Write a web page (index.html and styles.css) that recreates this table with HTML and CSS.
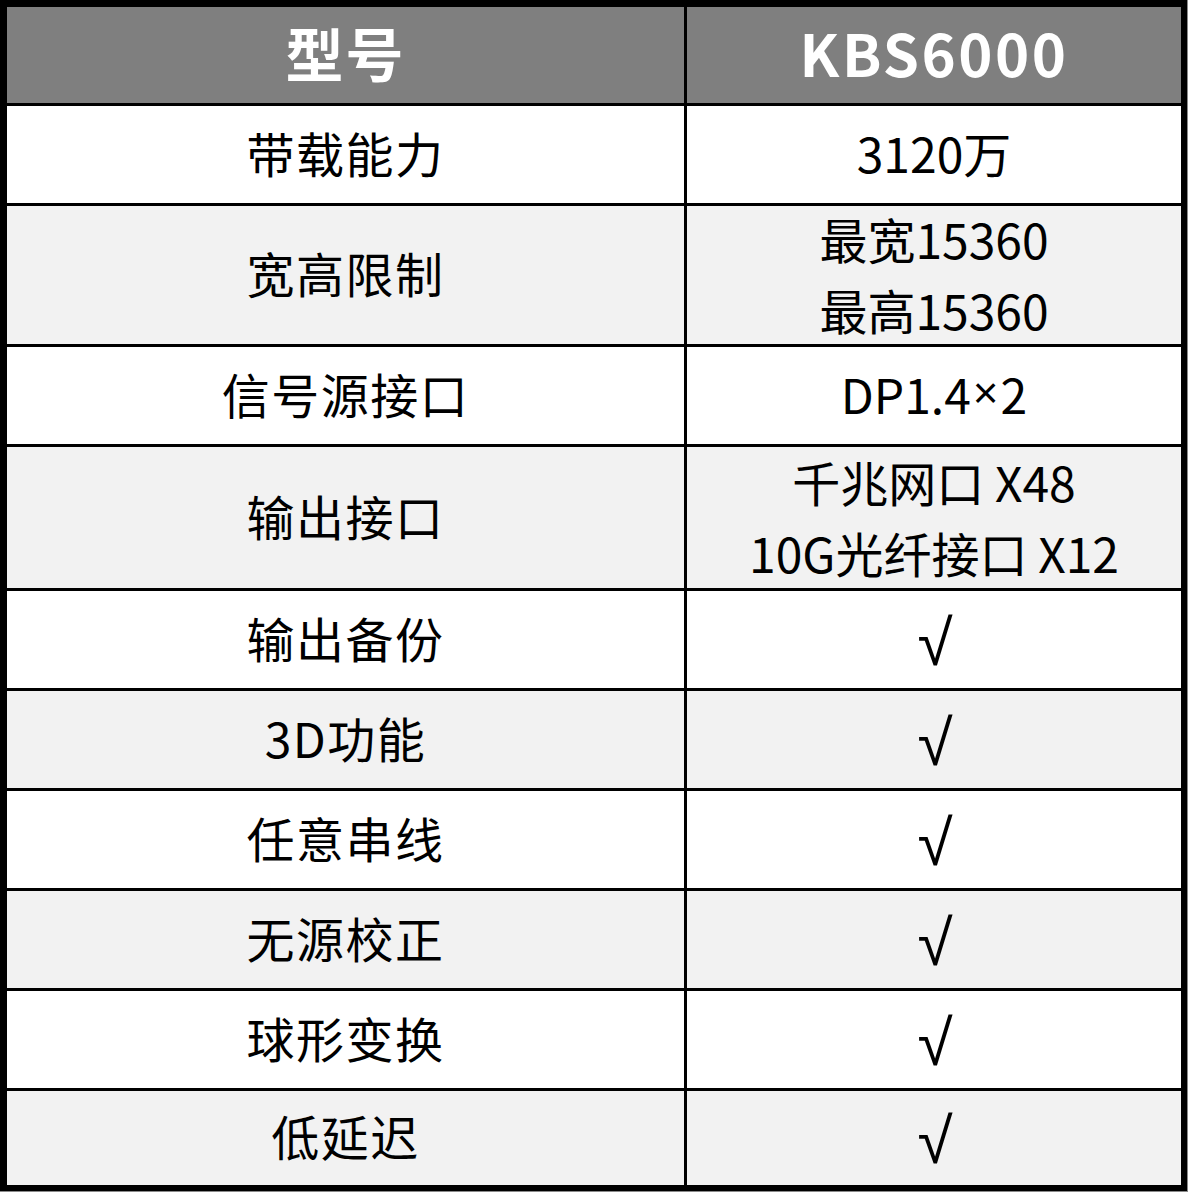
FILE: index.html
```html
<!DOCTYPE html>
<html lang="zh-CN">
<head>
<meta charset="utf-8">
<title>KBS6000</title>
<link rel="stylesheet" href="styles.css">
</head>
<body>
<div class="spec">
  <div class="cell head">型号</div>
  <div class="cell head latin">KBS6000</div>

  <div class="cell label">带载能力</div>
  <div class="cell value">3120万</div>

  <div class="cell label alt">宽高限制</div>
  <div class="cell value alt multi">最宽15360<br>最高15360</div>

  <div class="cell label">信号源接口</div>
  <div class="cell value">DP1.4<span class="times">×</span>2</div>

  <div class="cell label alt">输出接口</div>
  <div class="cell value alt multi">千兆网口 X48<br>10G光纤接口 X12</div>

  <div class="cell label">输出备份</div>
  <div class="cell check">√</div>

  <div class="cell label alt">3D功能</div>
  <div class="cell alt check">√</div>

  <div class="cell label">任意串线</div>
  <div class="cell check">√</div>

  <div class="cell label alt">无源校正</div>
  <div class="cell alt check">√</div>

  <div class="cell label">球形变换</div>
  <div class="cell check">√</div>

  <div class="cell label alt">低延迟</div>
  <div class="cell alt check">√</div>
</div>
</body>
</html>
```
FILE: styles.css
```css
html, body {
  margin: 0;
  padding: 0;
  background: #8a8a8a;
}
body {
  width: 1188px;
  height: 1192px;
  font-family: "Noto Sans CJK SC", "Noto Sans", sans-serif;
}
.spec {
  width: 1174px;
  display: grid;
  grid-template-columns: 677px 494px;
  grid-template-rows: 96px 97px 138px 97px 141px 97px 97px 97px 97px 97px 94px;
  gap: 3px;
  background: #000;
  border-style: solid;
  border-color: #000;
  border-width: 7px 6px 6px 7px;
}
.cell {
  background: #fff;
  color: #000;
  display: flex;
  align-items: center;
  justify-content: center;
  text-align: center;
  font-size: 48px;
  line-height: 70px;
  padding-bottom: 6px;
  box-sizing: border-box;
}
.label {
  letter-spacing: 1.5px;
}
.value {
  letter-spacing: 0;
}
.alt {
  background: #f2f2f2;
}
.head {
  background: #7f7f7f;
  color: #fff;
  font-weight: 700;
  font-size: 58px;
  letter-spacing: 2px;
}
.head.latin {
  letter-spacing: 2.5px;
}
.multi {
  line-height: 71px;
  padding-bottom: 2px;
}
.times {
  font-family: "Liberation Sans", sans-serif;
  font-size: 44px;
  margin: 0 2px;
}
.check {
  font-family: "Liberation Sans", sans-serif;
  font-size: 64px;
  padding-bottom: 0;
  padding-top: 6px;
  padding-left: 2px;
}
```
